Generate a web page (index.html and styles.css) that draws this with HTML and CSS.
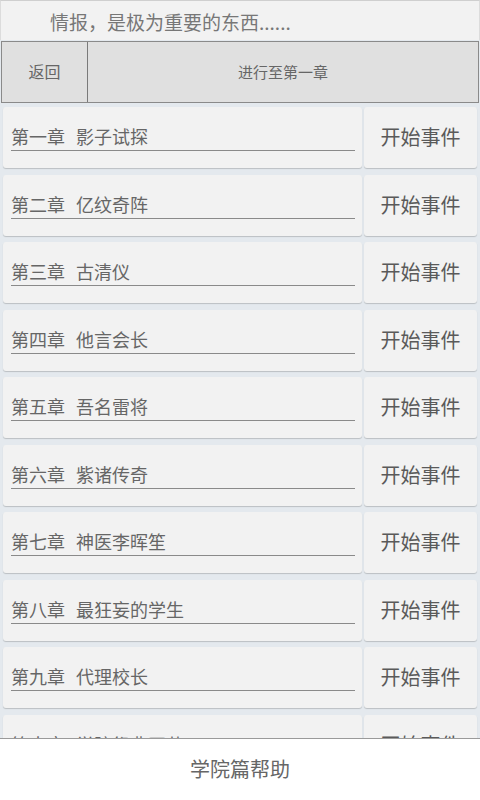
FILE: index.html
```html
<!DOCTYPE html>
<html lang="zh">
<head>
<meta charset="utf-8">
<link rel="stylesheet" href="styles.css">
</head>
<body>
<div class="header">情报，是极为重要的东西......</div>
<div class="bar">
  <div class="back">返回</div>
  <div class="progress">进行至第一章</div>
</div>
<div class="list">
  <div class="row"><div class="card name"><span class="field">第一章<span class="title">影子试探</span></span></div><div class="card btn">开始事件</div></div>
  <div class="row"><div class="card name"><span class="field">第二章<span class="title">亿纹奇阵</span></span></div><div class="card btn">开始事件</div></div>
  <div class="row"><div class="card name"><span class="field">第三章<span class="title">古清仪</span></span></div><div class="card btn">开始事件</div></div>
  <div class="row"><div class="card name"><span class="field">第四章<span class="title">他言会长</span></span></div><div class="card btn">开始事件</div></div>
  <div class="row"><div class="card name"><span class="field">第五章<span class="title">吾名雷将</span></span></div><div class="card btn">开始事件</div></div>
  <div class="row"><div class="card name"><span class="field">第六章<span class="title">紫诸传奇</span></span></div><div class="card btn">开始事件</div></div>
  <div class="row"><div class="card name"><span class="field">第七章<span class="title">神医李晖笙</span></span></div><div class="card btn">开始事件</div></div>
  <div class="row"><div class="card name"><span class="field">第八章<span class="title">最狂妄的学生</span></span></div><div class="card btn">开始事件</div></div>
  <div class="row"><div class="card name"><span class="field">第九章<span class="title">代理校长</span></span></div><div class="card btn">开始事件</div></div>
  <div class="row"><div class="card name"><span class="field">第十章<span class="title">学院祭典开幕</span></span></div><div class="card btn">开始事件</div></div>
</div>
<div class="footer">学院篇帮助</div>
</body>
</html>
```
FILE: styles.css
```css
html, body {
  margin: 0;
  padding: 0;
}
body {
  background: #e4e9ee;
  font-family: "Noto Sans CJK SC", "Noto Sans", sans-serif;
  height: 800px;
  overflow: hidden;
  color: #666;
}
.header {
  height: 40px;
  box-sizing: border-box;
  background: #f2f2f2;
  border-top: 1px solid #cfcfcf;
  border-left: 1px solid #dcdcdc;
  border-right: 1px solid #dcdcdc;
  padding-left: 49px;
  padding-top: 2px;
  font-size: 19px;
  line-height: 38px;
  color: #777;
}
.bar {
  display: flex;
  height: 62px;
  box-sizing: border-box;
  margin: 1px 1px 0 1px;
  border: 1px solid #8a8a8a;
  background: #e0e0e0;
}
.back {
  width: 85px;
  border-right: 1px solid #7a7a7a;
  display: flex;
  align-items: center;
  justify-content: center;
  font-size: 16px;
  color: #666;
  padding-bottom: 2px;
}
.progress {
  flex: 1;
  display: flex;
  align-items: center;
  justify-content: center;
  font-size: 15px;
  color: #666;
  padding-bottom: 2px;
}
.list {
  padding: 4px 3px 0 3px;
  display: flex;
  flex-direction: column;
  gap: 6.5px;
}
.row {
  display: flex;
  gap: 2px;
  height: 61px;
}
.card {
  background: #f2f2f2;
  border-radius: 3px;
  box-shadow: 0 1px 1px rgba(0, 0, 0, 0.18);
  box-sizing: border-box;
}
.name {
  width: 359px;
  padding: 17px 7px 0 8px;
}
.field {
  display: block;
  font-size: 18px;
  line-height: 24px;
  padding-bottom: 2px;
  border-bottom: 1px solid #8a8a8a;
  color: #666;
  white-space: nowrap;
}
.title {
  margin-left: 11px;
}
.btn {
  width: 113px;
  display: flex;
  align-items: center;
  justify-content: center;
  font-size: 20px;
  color: #5a5a5a;
  padding-bottom: 2px;
}
.footer {
  position: fixed;
  left: 0;
  right: 0;
  bottom: 0;
  height: 62px;
  box-sizing: border-box;
  border-top: 1px solid #9a9a9a;
  background: #fff;
  display: flex;
  align-items: center;
  justify-content: center;
  font-size: 20px;
  color: #666;
  padding-bottom: 2px;
}
```
